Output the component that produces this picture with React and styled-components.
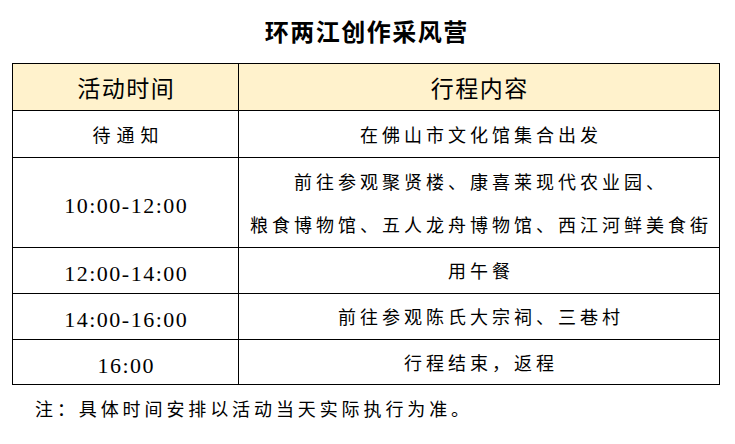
import React from "react";
import styled, { createGlobalStyle } from "styled-components";

const GlobalStyle = createGlobalStyle`
  html, body {
    margin: 0;
    padding: 0;
    background: #ffffff;
  }
  body {
    font-family: "Noto Sans CJK SC", "Noto Sans", sans-serif;
    color: #000000;
  }
`;

const Page = styled.div`
  width: 735px;
  height: 444px;
  overflow: hidden;
  display: flex;
  flex-direction: column;
  padding-left: 12px;
  box-sizing: border-box;
`;

const Title = styled.h1`
  margin: 0;
  width: 708px;
  height: 63px;
  padding-bottom: 3px;
  box-sizing: border-box;
  display: flex;
  align-items: center;
  justify-content: center;
  font-size: 24px;
  font-weight: 700;
  letter-spacing: 1.5px;
  text-indent: 1.5px;
`;

const Table = styled.table`
  width: 708px;
  border-collapse: collapse;
  table-layout: fixed;
`;

const HeadCell = styled.th`
  background: #fff2cc;
  border: 1.5px solid #000000;
  height: 46px;
  padding: 0 0 0 1.5px;
  font-size: 23px;
  font-weight: 400;
  letter-spacing: 1.5px;
  text-align: center;
  vertical-align: middle;
`;

const Row = styled.tr`
  height: ${(p) => p.$h}px;
`;

const Cell = styled.td`
  border: 1.5px solid #000000;
  padding: 0 0 0 4px;
  text-align: center;
  vertical-align: middle;
  font-size: 18px;
  line-height: 43px;
  letter-spacing: 4px;
`;

// the time column mixes a chinese label with serif digits
const TimeCell = styled(Cell)`
  font-family: ${(p) =>
    p.$digits
      ? '"Liberation Serif", "Noto Sans CJK SC", serif'
      : '"Noto Sans CJK SC", sans-serif'};
  font-size: ${(p) => (p.$digits ? 22 : 18)}px;
  line-height: ${(p) => (p.$digits ? 34 : 43)}px;
  letter-spacing: ${(p) => (p.$digits ? 1.5 : 6)}px;
  padding-left: ${(p) => (p.$digits ? 1.5 : 6)}px;
  padding-top: ${(p) => (p.$digits ? 7 : 0)}px;
`;

const Line = styled.div``;

const Note = styled.p`
  margin: 0;
  height: 46px;
  display: flex;
  align-items: center;
  padding-left: 23px;
  font-size: 18px;
  letter-spacing: 3.9px;
`;

const rows = [
  { time: "待通知", h: 47, lines: ["在佛山市文化馆集合出发"] },
  {
    time: "10:00-12:00",
    h: 90,
    lines: [
      "前往参观聚贤楼、康喜莱现代农业园、",
      "粮食博物馆、五人龙舟博物馆、西江河鲜美食街",
    ],
  },
  { time: "12:00-14:00", h: 46, lines: ["用午餐"] },
  { time: "14:00-16:00", h: 46, lines: ["前往参观陈氏大宗祠、三巷村"] },
  { time: "16:00", h: 45, lines: ["行程结束，返程"] },
];

function App() {
  return (
    <Page>
      <GlobalStyle />
      <Title>环两江创作采风营</Title>
      <Table>
        <colgroup>
          <col style={{ width: "226px" }} />
          <col />
        </colgroup>
        <thead>
          <tr>
            <HeadCell>活动时间</HeadCell>
            <HeadCell>行程内容</HeadCell>
          </tr>
        </thead>
        <tbody>
          {rows.map((r) => (
            <Row key={r.time} $h={r.h}>
              <TimeCell $digits={/\d/.test(r.time)}>{r.time}</TimeCell>
              <Cell>
                {r.lines.map((l) => (
                  <Line key={l}>{l}</Line>
                ))}
              </Cell>
            </Row>
          ))}
        </tbody>
      </Table>
      <Note>注：具体时间安排以活动当天实际执行为准。</Note>
    </Page>
  );
}

export default App;
